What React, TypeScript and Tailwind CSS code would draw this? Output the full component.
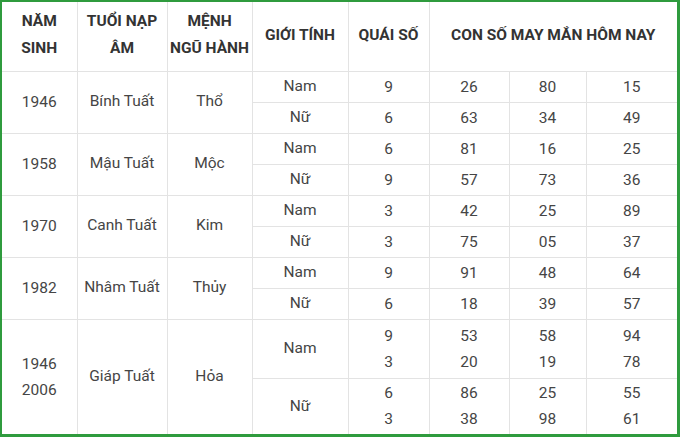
import React from 'react';

type Row = { gender: string; quai: string[]; nums: string[][] };
type Group = { years: string[]; napAm: string; menh: string; rows: Row[] };

const groups: Group[] = [
  {
    years: ['1946'],
    napAm: 'Bính Tuất',
    menh: 'Thổ',
    rows: [
      { gender: 'Nam', quai: ['9'], nums: [['26', '80', '15']] },
      { gender: 'Nữ', quai: ['6'], nums: [['63', '34', '49']] },
    ],
  },
  {
    years: ['1958'],
    napAm: 'Mậu Tuất',
    menh: 'Mộc',
    rows: [
      { gender: 'Nam', quai: ['6'], nums: [['81', '16', '25']] },
      { gender: 'Nữ', quai: ['9'], nums: [['57', '73', '36']] },
    ],
  },
  {
    years: ['1970'],
    napAm: 'Canh Tuất',
    menh: 'Kim',
    rows: [
      { gender: 'Nam', quai: ['3'], nums: [['42', '25', '89']] },
      { gender: 'Nữ', quai: ['3'], nums: [['75', '05', '37']] },
    ],
  },
  {
    years: ['1982'],
    napAm: 'Nhâm Tuất',
    menh: 'Thủy',
    rows: [
      { gender: 'Nam', quai: ['9'], nums: [['91', '48', '64']] },
      { gender: 'Nữ', quai: ['6'], nums: [['18', '39', '57']] },
    ],
  },
  {
    years: ['1946', '2006'],
    napAm: 'Giáp Tuất',
    menh: 'Hỏa',
    rows: [
      { gender: 'Nam', quai: ['9', '3'], nums: [['53', '58', '94'], ['20', '19', '78']] },
      { gender: 'Nữ', quai: ['6', '3'], nums: [['86', '25', '55'], ['38', '98', '61']] },
    ],
  },
];

const th = 'border border-[#e3e3e3] text-center align-middle font-bold text-[15.5px] leading-[27px] text-[#333] pb-0.5';
const td = 'border border-[#e3e3e3] text-center align-middle p-0';

function Lines({ items }: { items: string[] }) {
  return (
    <div className="leading-[26px]">
      {items.map((t, i) => (
        <div key={i}>{t}</div>
      ))}
    </div>
  );
}

export default function App() {
  return (
    <div
      className="w-[680px] h-[437px] bg-white border-l-2 border-t-2 border-r-[3px] border-b-[3px] border-[#2f9b3e] overflow-hidden"
      style={{ fontFamily: 'Roboto, "Noto Sans", sans-serif' }}
    >
      <table className="w-full table-fixed border-collapse border-hidden text-[15.5px] text-[#454545]">
        <colgroup>
          <col className="w-[75px]" />
          <col className="w-[90px]" />
          <col className="w-[85px]" />
          <col className="w-[96px]" />
          <col className="w-[81px]" />
          <col className="w-[80px]" />
          <col className="w-[77px]" />
          <col className="w-[91px]" />
        </colgroup>
        <thead>
          <tr className="h-[69px]">
            <th className={th}>NĂM<br />SINH</th>
            <th className={th}>TUỔI NẠP<br />ÂM</th>
            <th className={th}>MỆNH<br />NGŨ HÀNH</th>
            <th className={th}>GIỚI TÍNH</th>
            <th className={th}>QUÁI SỐ</th>
            <th className={th} colSpan={3}>CON SỐ MAY MẮN HÔM NAY</th>
          </tr>
        </thead>
        <tbody>
          {groups.map((g, gi) =>
            g.rows.map((r, ri) => {
              const last = gi === groups.length - 1;
              const h = last ? (ri === 0 ? 'h-[59px]' : 'h-[56px]') : 'h-[31px]';
              return (
                <tr key={`${gi}-${ri}`} className={h}>
                  {ri === 0 && (
                    <>
                      <td className={td} rowSpan={g.rows.length}>
                        <Lines items={g.years} />
                      </td>
                      <td className={td} rowSpan={g.rows.length}>{g.napAm}</td>
                      <td className={td} rowSpan={g.rows.length}>{g.menh}</td>
                    </>
                  )}
                  <td className={td}>{r.gender}</td>
                  <td className={td}>
                    <Lines items={r.quai} />
                  </td>
                  {[0, 1, 2].map((c) => (
                    <td key={c} className={td}>
                      <Lines items={r.nums.map((n) => n[c])} />
                    </td>
                  ))}
                </tr>
              );
            })
          )}
        </tbody>
      </table>
    </div>
  );
}
